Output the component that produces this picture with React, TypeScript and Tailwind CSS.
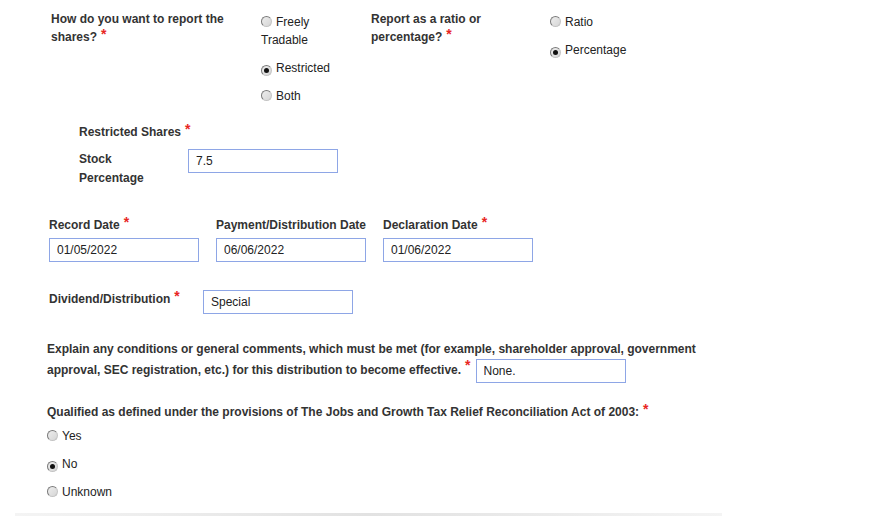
import { useState } from "react";

const labelCls = "text-[12px] font-bold leading-[18px] text-[#333]";
const inputCls =
  "h-[24px] w-[150px] border border-[#8ea6e6] bg-white px-[7px] text-[12px] text-[#222] outline-none";

function Star() {
  return (
    <span className="ml-[4px] inline-block h-0 align-top text-[14px] font-bold leading-[12px] text-[#e8261f]">
      *
    </span>
  );
}

function Radio({
  label,
  checked,
  onClick,
}: {
  label: string;
  checked: boolean;
  onClick: () => void;
}) {
  return (
    <div className="mb-[10px] cursor-default text-[12px] leading-[18px] text-[#222]" onClick={onClick}>
      <span className="mr-[4px] inline-flex h-[11px] w-[11px] items-center justify-center rounded-full border border-[#7a7a7a] border-b-[#c4c4c4] border-r-[#c4c4c4] bg-gradient-to-br from-[#ededed] to-[#d6d6d6] align-[-1px]">
        {checked && <span className="h-[5px] w-[5px] rounded-full bg-[#111]" />}
      </span>
      {label}
    </div>
  );
}

function RadioGroup({ options, initial }: { options: string[]; initial: string }) {
  const [value, setValue] = useState(initial);
  return (
    <div>
      {options.map((o) => (
        <Radio key={o} label={o} checked={value === o} onClick={() => setValue(o)} />
      ))}
    </div>
  );
}

export default function App() {
  return (
    <div className="relative h-[516px] w-[894px] overflow-hidden bg-white font-['Liberation_Sans',Arial,sans-serif]">
      <div className="pl-[47px]">
        {/* report type / ratio */}
        <div className="flex pt-[10px]">
          <div className={`${labelCls} ml-[4px] w-[210px]`}>
            How do you want to report the shares?
            <Star />
          </div>
          <div className="mt-[3px] w-[110px]">
            <div className="w-[92px]">
              <RadioGroup options={["Freely Tradable", "Restricted", "Both"]} initial="Restricted" />
            </div>
          </div>
          <div className={`${labelCls} w-[179px]`}>
            <div className="w-[130px]">
              Report as a ratio or percentage?
              <Star />
            </div>
          </div>
          <div className="mt-[3px]">
            <RadioGroup options={["Ratio", "Percentage"]} initial="Percentage" />
          </div>
        </div>

        {/* restricted shares */}
        <div className="ml-[32px] mt-[8px]">
          <div className={labelCls}>
            Restricted Shares
            <Star />
          </div>
          <div className="mt-[8px] flex">
            <div className={`${labelCls} w-[109px] pt-[1px] leading-[19px]`}>
              Stock
              <br />
              Percentage
            </div>
            <input className={`${inputCls} h-[23px]`} defaultValue="7.5" />
          </div>
        </div>

        {/* dates */}
        <div className="ml-[2px] mt-[28px] flex gap-[17px]">
          {[
            ["Record Date", "01/05/2022", true],
            ["Payment/Distribution Date", "06/06/2022", false],
            ["Declaration Date", "01/06/2022", true],
          ].map(([l, v, req]) => (
            <div key={l as string} className="w-[150px]">
              <div className={`${labelCls} whitespace-nowrap`}>
                {l}
                {req && <Star />}
              </div>
              <input className={`${inputCls} mt-[4px]`} defaultValue={v as string} />
            </div>
          ))}
        </div>

        {/* dividend */}
        <div className="ml-[2px] mt-[28px] flex items-start">
          <div className={`${labelCls} w-[154px]`}>
            Dividend/Distribution
            <Star />
          </div>
          <input className={inputCls} defaultValue="Special" />
        </div>

        {/* conditions */}
        <div className={`${labelCls} mt-[25px] w-[660px] leading-[20px]`}>
          Explain any conditions or general comments, which must be met (for example, shareholder
          approval, government approval, SEC registration, etc.) for this distribution to become
          effective.
          <Star />
          <input className={`${inputCls} ml-[5px] h-[23px] w-[149px] align-middle font-normal`} defaultValue="None." />
        </div>

        {/* qualified */}
        <div className={`${labelCls} mt-[20px]`}>
          Qualified as defined under the provisions of The Jobs and Growth Tax Relief Reconciliation Act of 2003:
          <Star />
        </div>
        <div className="mt-[6px]">
          <RadioGroup options={["Yes", "No", "Unknown"]} initial="No" />
        </div>
      </div>

      <div className="absolute bottom-0 left-[15px] h-[3px] w-[707px] bg-gradient-to-r from-[#f4f4f4] via-[#e2e2e2] to-[#f4f4f4]" />
    </div>
  );
}
